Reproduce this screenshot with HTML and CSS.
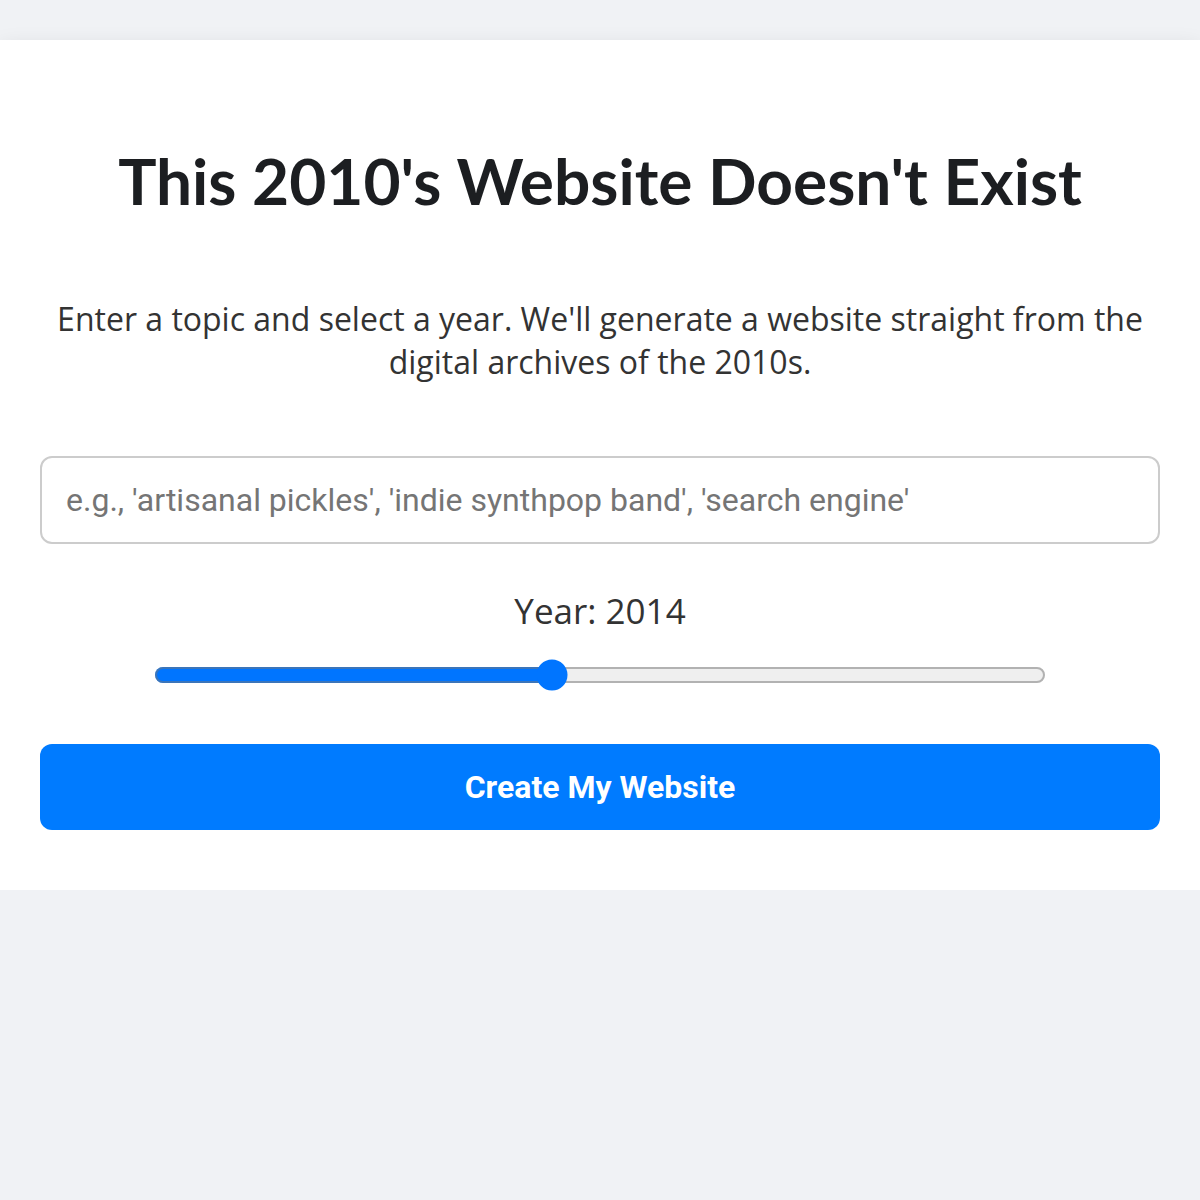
FILE: index.html
```html
<!DOCTYPE html>
<html lang="en">
<head>
    <meta charset="UTF-8">
    <title>This 2010's Website Doesn't Exist</title>
    <link rel="stylesheet" href="styles.css">
</head>
<body>
<div class="card">
    <h1 class="title">This 2010's Website Doesn't Exist</h1>
    <p class="intro">Enter a topic and select a year. We'll generate a website straight from the digital archives of the 2010s.</p>
    <input class="topic" type="text" placeholder="e.g., 'artisanal pickles', 'indie synthpop band', 'search engine'">
    <div class="year">
        <label class="yearlabel" for="year">Year: <span id="yearval">2014</span></label>
        <input class="yearrange" id="year" type="range" min="2010" max="2019" value="2014">
    </div>
    <button class="go">Create My Website</button>
</div>
</body>
</html>
```

FILE: styles.css
```css
body{
    margin:0;
    padding-top:40px;
    background:#f0f2f5;
    font-family:"Open Sans", sans-serif;
}
.card{
    background:#fff;
    padding:60px 40px;
    text-align:center;
    box-shadow:0 6px 20px rgba(0,0,0,0.1);
}
.title{
    font-family:Lato, sans-serif;
    font-weight:700;
    font-size:64px;
    line-height:1.2;
    color:#1c1e21;
    margin:43px 0 77px;
}
.intro{
    font-size:32px;
    color:#333;
    margin:0 0 73px;
}
.topic{
    display:block;
    box-sizing:border-box;
    width:100%;
    height:88px;
    padding:0 24px;
    border:2px solid #ccc;
    border-radius:12px;
    font-family:Roboto, sans-serif;
    font-size:32px;
    color:#333;
    outline:none;
}
.topic::placeholder{
    color:#757575;
}
.year{
    margin-top:43px;
}
.yearlabel{
    display:block;
    font-size:35px;
    color:#333;
    margin-bottom:25px;
}
.yearrange{
    zoom:2;
    width:446px;
    margin:2px auto;
    display:block;
}
.go{
    display:block;
    width:100%;
    height:86px;
    margin-top:53px;
    border:0;
    border-radius:12px;
    background:#007bff;
    color:#fff;
    font-family:Roboto, sans-serif;
    font-weight:700;
    font-size:32px;
    cursor:pointer;
}
```
